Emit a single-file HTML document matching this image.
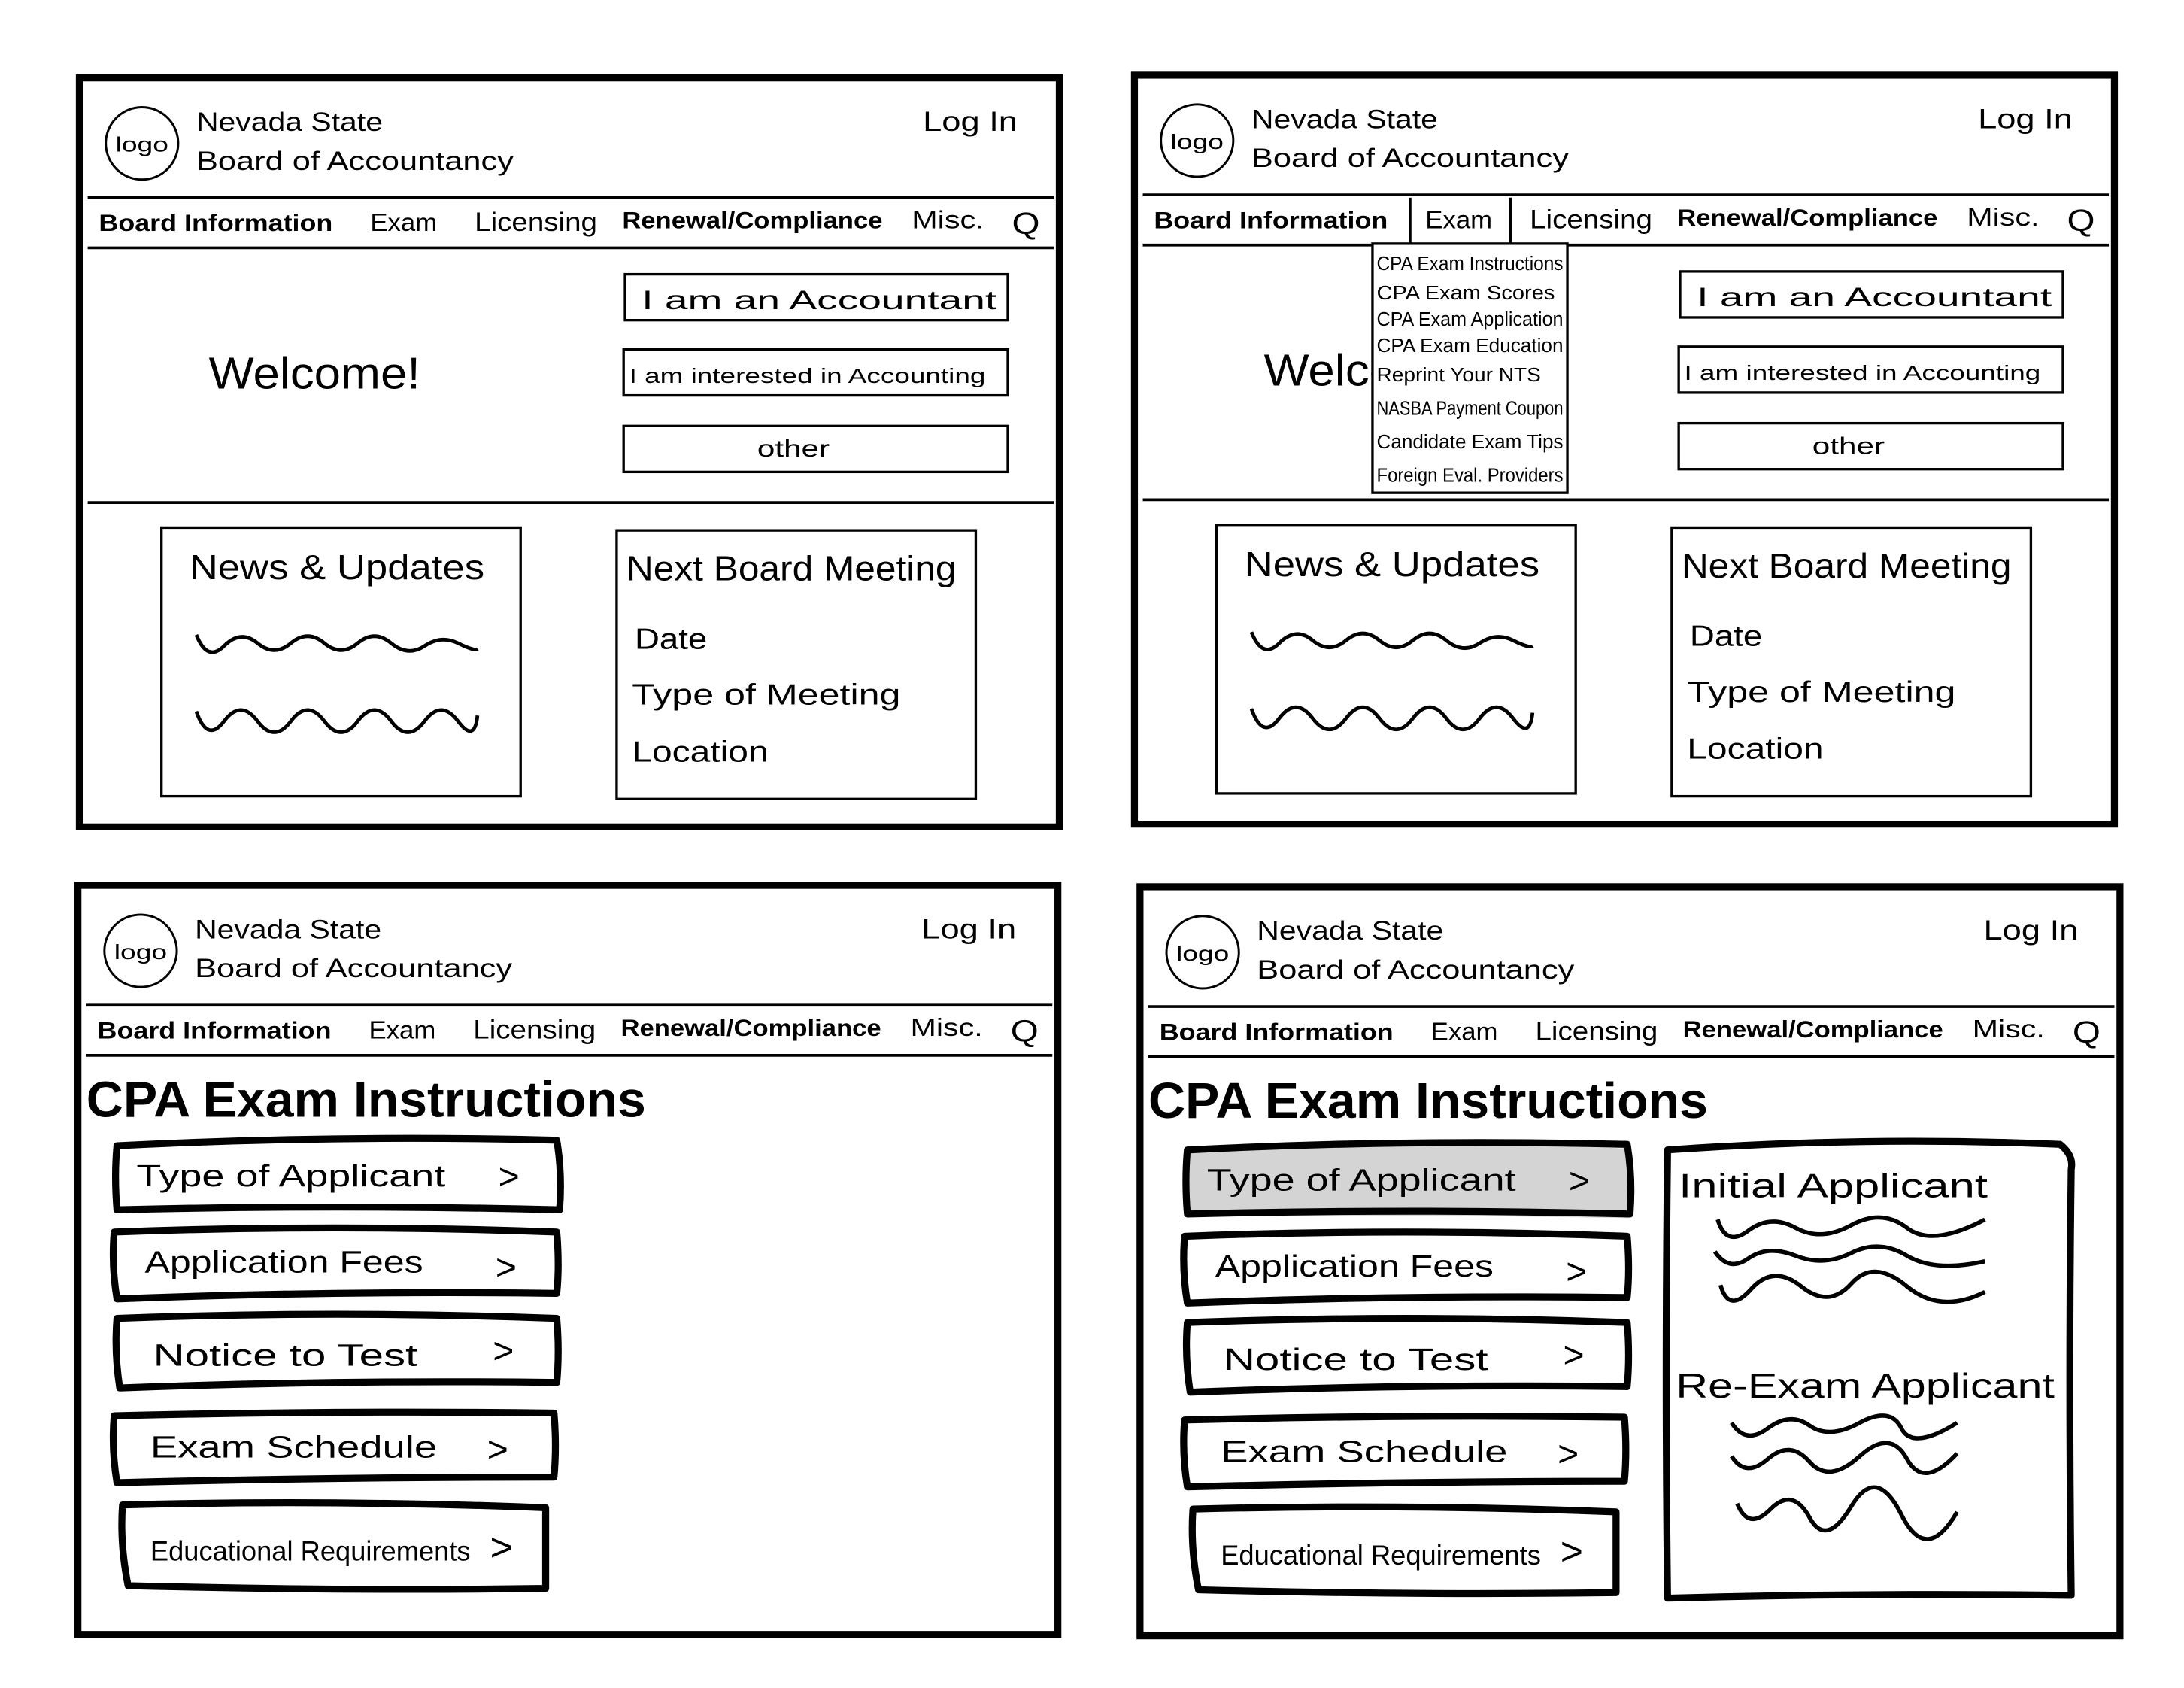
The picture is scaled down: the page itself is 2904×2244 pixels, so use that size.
<!DOCTYPE html>
<html><head><meta charset="utf-8"><style>
html,body{margin:0;padding:0;background:#fff;}
svg{display:block}
text{font-family:"Liberation Sans",sans-serif;fill:#000}
</style></head><body>
<svg width="2904" height="2244" viewBox="0 0 1569 1212.5" preserveAspectRatio="none" xmlns="http://www.w3.org/2000/svg">
<rect width="1569" height="1213" fill="#fff"/>
<defs>
<g id="hdr">
  <circle cx="45" cy="47" r="26" fill="none" stroke="#000" stroke-width="1.6"/>
  <text x="26" y="53" font-size="15" textLength="38" lengthAdjust="spacingAndGlyphs">logo</text>
  <text x="84" y="38" font-size="19" textLength="134" lengthAdjust="spacingAndGlyphs">Nevada State</text>
  <text x="84" y="66" font-size="19" textLength="228" lengthAdjust="spacingAndGlyphs">Board of Accountancy</text>
  <text x="606" y="38" font-size="20" textLength="68" lengthAdjust="spacingAndGlyphs">Log In</text>
  <line x1="6" y1="86" x2="700" y2="86" stroke="#000" stroke-width="2"/>
  <line x1="6" y1="122" x2="700" y2="122" stroke="#000" stroke-width="2"/>
  <text x="14" y="110" font-size="17" font-weight="bold" textLength="168" lengthAdjust="spacingAndGlyphs">Board Information</text>
  <text x="209" y="110" font-size="18" textLength="48" lengthAdjust="spacingAndGlyphs">Exam</text>
  <text x="284" y="110" font-size="19" textLength="88" lengthAdjust="spacingAndGlyphs">Licensing</text>
  <text x="390" y="108" font-size="17" font-weight="bold" textLength="187" lengthAdjust="spacingAndGlyphs">Renewal/Compliance</text>
  <text x="598" y="108" font-size="18" textLength="52" lengthAdjust="spacingAndGlyphs">Misc.</text>
  <text x="670" y="112" font-size="22" textLength="20" lengthAdjust="spacingAndGlyphs">Q</text>
</g>
<g id="home">
  <rect x="0" y="0" width="704" height="538" fill="none" stroke="#000" stroke-width="5"/>
  <use href="#hdr"/>
  <line x1="6" y1="305" x2="700" y2="305" stroke="#000" stroke-width="2"/>
  <text x="93" y="223" font-size="32" textLength="152" lengthAdjust="spacingAndGlyphs">Welcome!</text>
  <rect x="392" y="141" width="275" height="33" fill="none" stroke="#000" stroke-width="1.8"/>
  <text x="404" y="166" font-size="19" textLength="255" lengthAdjust="spacingAndGlyphs">I  am   an   Accountant</text>
  <rect x="391" y="195" width="276" height="33" fill="none" stroke="#000" stroke-width="1.8"/>
  <text x="395" y="219" font-size="15" textLength="256" lengthAdjust="spacingAndGlyphs">I am interested in Accounting</text>
  <rect x="391" y="250" width="276" height="33" fill="none" stroke="#000" stroke-width="1.8"/>
  <text x="487" y="272" font-size="17" textLength="52" lengthAdjust="spacingAndGlyphs">other</text>
  <rect x="59" y="323" width="258" height="193" fill="none" stroke="#000" stroke-width="1.8"/>
  <text x="79" y="360" font-size="25" textLength="212" lengthAdjust="spacingAndGlyphs">News &amp; Updates</text>
  <path d="M84 400 Q92 420 104 408 T128 406 T152 406 T176 406 T200 406 T224 406 T248 408 T272 406 T286 410" fill="none" stroke="#000" stroke-width="2.6"/>
  <path d="M84 455 Q92 478 104 462 T128 462 T152 462 T176 462 T200 462 T224 462 T248 462 T272 462 T286 458" fill="none" stroke="#000" stroke-width="2.6"/>
  <rect x="386" y="325" width="258" height="193" fill="none" stroke="#000" stroke-width="1.8"/>
  <text x="393" y="361" font-size="25" textLength="237" lengthAdjust="spacingAndGlyphs">Next Board Meeting</text>
  <text x="399" y="410" font-size="21" textLength="52" lengthAdjust="spacingAndGlyphs">Date</text>
  <text x="397" y="450" font-size="21" textLength="193" lengthAdjust="spacingAndGlyphs">Type of Meeting</text>
  <text x="397" y="491" font-size="21" textLength="98" lengthAdjust="spacingAndGlyphs">Location</text>
</g>
<g id="instr">
  <rect x="0" y="0" width="704" height="538" fill="none" stroke="#000" stroke-width="5"/>
  <use href="#hdr"/>
  <text x="6" y="166" font-size="36" font-weight="bold" textLength="402" lengthAdjust="spacingAndGlyphs">CPA Exam Instructions</text>
</g>
<g id="btns">
  <path d="M2 6 Q160 -2 318 2 Q322 26 320 52 Q160 48 2 52 Q0 28 2 6Z" fill="none" stroke="#000" stroke-width="5" stroke-linejoin="round"/>
  <text x="16" y="35" font-size="22" textLength="222" lengthAdjust="spacingAndGlyphs">Type of Applicant</text>
  <text x="276" y="37" font-size="26">&gt;</text>
  <g transform="translate(-2,64)">
    <path d="M2 4 Q160 -2 320 4 Q322 28 320 48 Q160 46 4 52 Q0 28 2 4Z" fill="none" stroke="#000" stroke-width="5" stroke-linejoin="round"/>
    <text x="24" y="33" font-size="22" textLength="200" lengthAdjust="spacingAndGlyphs">Application   Fees</text>
    <text x="276" y="38" font-size="26">&gt;</text>
  </g>
  <g transform="translate(0,126)">
    <path d="M2 4 Q160 -2 318 4 Q320 28 318 50 Q160 48 4 54 Q0 28 2 4Z" fill="none" stroke="#000" stroke-width="5" stroke-linejoin="round"/>
    <text x="28" y="38" font-size="22" textLength="190" lengthAdjust="spacingAndGlyphs">Notice to Test</text>
    <text x="272" y="36" font-size="26">&gt;</text>
  </g>
  <g transform="translate(-2,194)">
    <path d="M2 6 Q160 2 318 4 Q320 28 318 50 Q160 50 4 54 Q0 30 2 6Z" fill="none" stroke="#000" stroke-width="5" stroke-linejoin="round"/>
    <text x="28" y="36" font-size="22" textLength="206" lengthAdjust="spacingAndGlyphs">Exam Schedule</text>
    <text x="270" y="39" font-size="26">&gt;</text>
  </g>
  <g transform="translate(4,262)">
    <path d="M2 2 Q150 -2 306 4 Q306 34 306 62 Q160 64 6 60 Q0 30 2 2Z" fill="none" stroke="#000" stroke-width="5" stroke-linejoin="round"/>
    <text x="22" y="42" font-size="20" textLength="230" lengthAdjust="spacingAndGlyphs">Educational Requirements</text>
    <text x="266" y="42" font-size="28">&gt;</text>
  </g>
</g>
</defs>

<use href="#home" transform="translate(57,56)"/>
<g transform="translate(815,54)">
  <use href="#home"/>
  <line x1="198" y1="88" x2="198" y2="122" stroke="#000" stroke-width="2"/>
  <line x1="270" y1="88" x2="270" y2="122" stroke="#000" stroke-width="2"/>
  <rect x="171" y="121" width="140" height="179" fill="#fff" stroke="#000" stroke-width="1.8"/>
  <g font-size="14">
    <text x="174" y="140" textLength="134" lengthAdjust="spacingAndGlyphs">CPA Exam Instructions</text>
    <text x="174" y="161" textLength="128" lengthAdjust="spacingAndGlyphs">CPA Exam Scores</text>
    <text x="174" y="180" textLength="134" lengthAdjust="spacingAndGlyphs">CPA Exam Application</text>
    <text x="174" y="199" textLength="134" lengthAdjust="spacingAndGlyphs">CPA Exam Education</text>
    <text x="174" y="220" textLength="118" lengthAdjust="spacingAndGlyphs">Reprint Your NTS</text>
    <text x="174" y="244" textLength="134" lengthAdjust="spacingAndGlyphs">NASBA Payment Coupon</text>
    <text x="174" y="268" textLength="134" lengthAdjust="spacingAndGlyphs">Candidate Exam Tips</text>
    <text x="174" y="292" textLength="134" lengthAdjust="spacingAndGlyphs">Foreign Eval. Providers</text>
  </g>
</g>

<use href="#instr" transform="translate(56,636)"/>
<use href="#btns" transform="translate(82,817)"/>

<g transform="translate(819,637)">
  <use href="#instr"/>
</g>
<path d="M854 827 Q1010 818 1170 825 Q1174 850 1170 875 Q1010 872 854 874 Q850 850 854 827Z" fill="#d4d4d4"/>
<use href="#btns" transform="translate(851,820)"/>
<path d="M1198 826 Q1340 816 1480 822 Q1490 830 1488 840 Q1486 990 1488 1146 Q1340 1144 1198 1148 Q1196 990 1198 826Z" fill="none" stroke="#000" stroke-width="5" stroke-linejoin="round"/>
<text x="1206" y="860" font-size="24" textLength="222" lengthAdjust="spacingAndGlyphs">Initial   Applicant</text>
<g fill="none" stroke="#000" stroke-width="3">
  <path d="M1234 876 Q1240 896 1256 884 T1290 882 T1330 880 T1370 882 T1426 876"/>
  <path d="M1232 899 Q1242 914 1256 904 T1290 902 T1330 900 T1370 902 T1426 906"/>
  <path d="M1236 923 Q1242 944 1258 926 T1294 924 T1330 922 T1370 924 T1426 928"/>
  <path d="M1244 1022 Q1254 1038 1270 1026 T1300 1024 T1336 1022 T1366 1026 T1406 1022"/>
  <path d="M1244 1046 Q1254 1062 1270 1048 T1300 1050 T1336 1046 T1370 1048 T1406 1044"/>
  <path d="M1248 1080 Q1256 1100 1272 1084 T1300 1090 T1330 1082 T1366 1088 T1406 1086"/>
</g>
<text x="1204" y="1004" font-size="25" textLength="272" lengthAdjust="spacingAndGlyphs">Re-Exam   Applicant</text>
</svg>
</body></html>
